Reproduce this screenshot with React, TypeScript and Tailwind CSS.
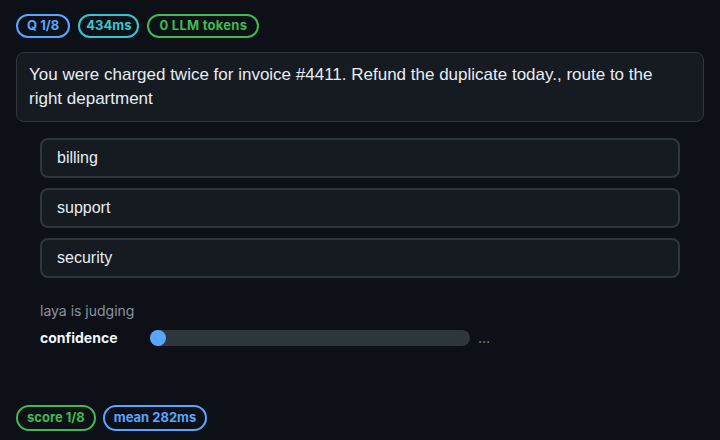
export default function App() {
  const options = ["billing", "support", "security"];

  return (
    <div className="w-[720px] h-[440px] bg-[#0d1117] text-[#e6edf3] px-4 pt-[14px] flex flex-col">
      {/* header badges */}
      <div className="flex gap-2 font-['Inter',sans-serif] text-[13px] font-bold">
        <span className="h-6 px-[9px] flex items-center rounded-full border-2 border-[#58a6ff] text-[#58a6ff]">Q 1/8</span>
        <span className="h-6 px-[6px] flex items-center rounded-full border-2 border-[#39c5cf] text-[#39c5cf]">434ms</span>
        <span className="h-6 px-[10px] flex items-center rounded-full border-2 border-[#3fb950] text-[#3fb950] tracking-[0.02em]">0 LLM tokens</span>
      </div>

      {/* question */}
      <div className="mt-[14px] rounded-lg border border-[#30363d] bg-[#161b22] pl-3 pr-6 py-2.5 font-['Liberation_Sans',Arial,sans-serif] text-[17px] leading-6">
        You were charged twice for invoice #4411. Refund the duplicate today., route to the right department
      </div>

      {/* options */}
      <div className="mx-6 mt-4 flex flex-col gap-2.5">
        {options.map((o) => (
          <div
            key={o}
            className="h-10 flex items-center px-[15px] rounded-lg border-2 border-[#30363d] bg-[#161b22] font-['Liberation_Sans',Arial,sans-serif] text-base"
          >
            {o}
          </div>
        ))}
      </div>

      {/* judging */}
      <div className="mx-6 mt-[23px] font-['Inter',sans-serif]">
        <div className="text-[14px] text-[#8b949e] leading-5">laya is judging</div>
        <div className="mt-[6px] flex items-center">
          <span className="w-[110px] text-[14px] font-bold text-[#f0f6fc]">confidence</span>
          <div className="relative w-[320px] h-4 rounded-full bg-[#30363d]">
            <div className="absolute left-0 top-0 w-4 h-4 rounded-full bg-[#58a6ff]" />
          </div>
          <span className="ml-2 text-[14px] text-[#8b949e]">…</span>
        </div>
      </div>

      {/* footer badges */}
      <div className="mt-auto mb-[9px] flex gap-[7px] font-['Inter',sans-serif] text-[13px] font-bold">
        <span className="h-[26px] px-[9px] flex items-center rounded-full border-2 border-[#3fb950] text-[#3fb950]">score 1/8</span>
        <span className="h-[26px] px-[9px] flex items-center rounded-full border-2 border-[#58a6ff] text-[#58a6ff]">mean 282ms</span>
      </div>
    </div>
  );
}
